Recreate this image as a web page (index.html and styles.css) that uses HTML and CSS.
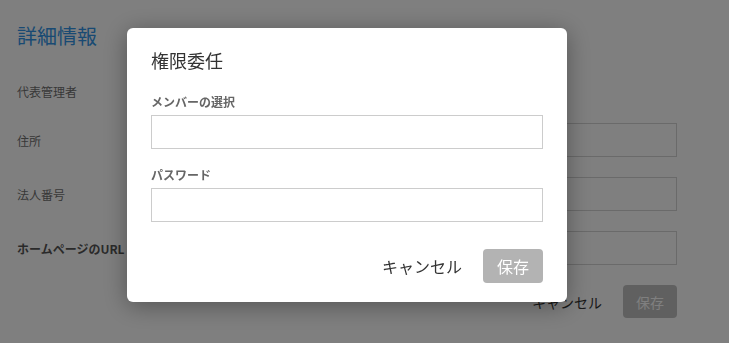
FILE: index.html
```html
<!DOCTYPE html>
<html lang="ja">
<head>
  <meta charset="UTF-8">
  <title>詳細情報 — 権限委任</title>
  <link rel="stylesheet" href="styles.css">
</head>
<body>
  <!-- 詳細情報フォーム -->
  <div class="detail-page">
    <h2 class="detail-title">詳細情報</h2>
    <div class="detail-grid">
      <div class="detail-label first">代表管理者</div>
      <div class="detail-value first"></div>
      <div class="detail-label">住所</div>
      <input class="detail-input" type="text">
      <div class="detail-label">法人番号</div>
      <input class="detail-input" type="text">
      <div class="detail-label strong">ホームページのURL</div>
      <input class="detail-input" type="text">
    </div>
    <div class="detail-actions">
      <button class="btn-text small">キャンセル</button>
      <button class="btn-save small">保存</button>
    </div>
  </div>

  <!-- モーダル -->
  <div class="modal-overlay">
    <div class="modal">
      <div class="modal-title">権限委任</div>
      <div class="modal-field">
        <label class="modal-label">メンバーの選択</label>
        <input class="modal-input" type="text">
      </div>
      <div class="modal-field">
        <label class="modal-label">パスワード</label>
        <input class="modal-input" type="password">
      </div>
      <div class="modal-footer">
        <button class="btn-text">キャンセル</button>
        <button class="btn-save">保存</button>
      </div>
    </div>
  </div>
</body>
</html>
```

FILE: styles.css
```css
body {
  margin: 0;
  background: #fff;
  font-family: "Noto Sans CJK JP", "Noto Sans", sans-serif;
  color: #333;
}
.detail-page {
  padding: 21px 52px 0 17px;
}
.detail-title {
  margin: 0;
  font-size: 20px;
  line-height: 30px;
  font-weight: 400;
  color: #3394e6;
}
.detail-grid {
  display: grid;
  grid-template-columns: 200px 1fr;
  grid-auto-rows: 34px;
  row-gap: 20px;
  align-items: center;
  margin-top: 30px;
}
.detail-label {
  font-size: 12px;
  color: #707070;
}
.detail-label.first,
.detail-value.first {
  height: 22px;
  line-height: 22px;
}
.detail-grid > .first { align-self: start; }
.detail-grid { grid-template-rows: 22px; }
.detail-label.strong {
  font-weight: 700;
  color: #555;
}
.detail-input {
  box-sizing: border-box;
  height: 34px;
  border: 1px solid #d4d4d4;
  background: #fff;
  font: inherit;
}
.detail-actions {
  display: flex;
  justify-content: flex-end;
  align-items: center;
  gap: 21px;
  margin-top: 20px;
}
.btn-text {
  background: none;
  border: none;
  padding: 0;
  font-family: inherit;
  font-size: 16px;
  color: #333;
  cursor: pointer;
}
.btn-text.small { font-size: 14px; }
.btn-save {
  height: 34px;
  width: 60px;
  border: none;
  border-radius: 4px;
  background: #b3b3b3;
  color: #fff;
  font-family: inherit;
  font-size: 16px;
  cursor: pointer;
}
.btn-save.small {
  height: 33px;
  width: 54px;
  font-size: 14px;
  background: #c0c0c0;
}
/* モーダル */
.modal-overlay {
  position: fixed;
  inset: 0;
  background: rgba(0, 0, 0, 0.5);
  display: flex;
  align-items: flex-start;
  padding: 28px 0 0 127px;
}
.modal {
  box-sizing: border-box;
  width: 440px;
  background: #fff;
  border-radius: 6px;
  box-shadow: 0 4px 24px rgba(0, 0, 0, 0.35);
  padding: 20px 24px 19px 24px;
}
.modal-title {
  font-size: 18px;
  line-height: 24px;
  color: #333;
  margin-bottom: 21px;
}
.modal-field + .modal-field { margin-top: 17px; }
.modal-label {
  display: block;
  font-size: 12px;
  line-height: 18px;
  font-weight: 700;
  color: #666;
  margin-bottom: 4px;
}
.modal-input {
  display: block;
  box-sizing: border-box;
  width: 100%;
  height: 34px;
  border: 1px solid #ccc;
  border-radius: 0;
  font: inherit;
  outline: none;
}
.modal-footer {
  display: flex;
  justify-content: flex-end;
  align-items: center;
  gap: 21px;
  margin-top: 27px;
}
```
